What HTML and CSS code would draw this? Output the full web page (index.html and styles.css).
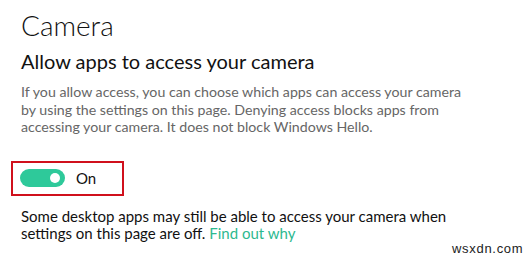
FILE: index.html
```html
<!DOCTYPE html>
<html>
<head>
<meta charset="utf-8">
<link rel="stylesheet" href="styles.css">
</head>
<body>
<main class="page">
  <h1 class="title">Camera</h1>
  <h2 class="subtitle">Allow apps to access your camera</h2>
  <p class="desc">If you allow access, you can choose which apps can access your camera by using the settings on this page. Denying access blocks apps from accessing your camera. It does not block Windows Hello.</p>
  <div class="toggle-wrap">
    <span class="toggle"><span class="knob"></span></span>
    <span class="toggle-label">On</span>
  </div>
  <p class="note">Some desktop apps may still be able to access your camera when settings on this page are off. <a class="link" href="#">Find out why</a></p>
</main>
<div class="watermark">wsxdn.com</div>
</body>
</html>
```
FILE: styles.css
```css
html, body {
  margin: 0;
  padding: 0;
  background: #fff;
  width: 525px;
  height: 259px;
  overflow: hidden;
  font-family: "Lato", "Noto Sans", sans-serif;
}
body { position: relative; }
.page {
  padding: 8px 0 0 21px;
}
.title {
  margin: 0;
  font-size: 28px;
  font-weight: 300;
  line-height: 34px;
  color: #111;
}
.subtitle {
  margin: 6px 0 0;
  font-size: 20px;
  font-weight: 400;
  line-height: 26px;
  color: #111;
}
.desc {
  margin: 9px 0 0;
  width: 440px;
  font-size: 14.2px;
  line-height: 17.5px;
  color: #666;
}
.toggle-wrap {
  margin: 25px 0 0 -10px;
  width: 102px;
  height: 31px;
  border: 2px solid #d0101c;
  display: flex;
  align-items: center;
  padding-left: 7px;
  box-sizing: content-box;
}
.toggle {
  width: 45px;
  height: 18px;
  border-radius: 9px;
  background: #2ec99a;
  position: relative;
  display: block;
}
.knob {
  position: absolute;
  right: 5px;
  top: 4px;
  width: 10px;
  height: 10px;
  border-radius: 50%;
  background: #fff;
}
.toggle-label {
  margin-left: 11px;
  font-size: 15px;
  color: #111;
}
.note {
  margin: 12px 0 0;
  width: 445px;
  font-size: 15px;
  line-height: 17px;
  color: #111;
}
.link {
  color: #2db98f;
  text-decoration: none;
}
.watermark {
  position: absolute;
  left: 452px;
  top: 241px;
  font-family: "Liberation Sans", Arial, sans-serif;
  font-size: 13px;
  letter-spacing: 0.7px;
  line-height: 15px;
  color: #222;
}
```
